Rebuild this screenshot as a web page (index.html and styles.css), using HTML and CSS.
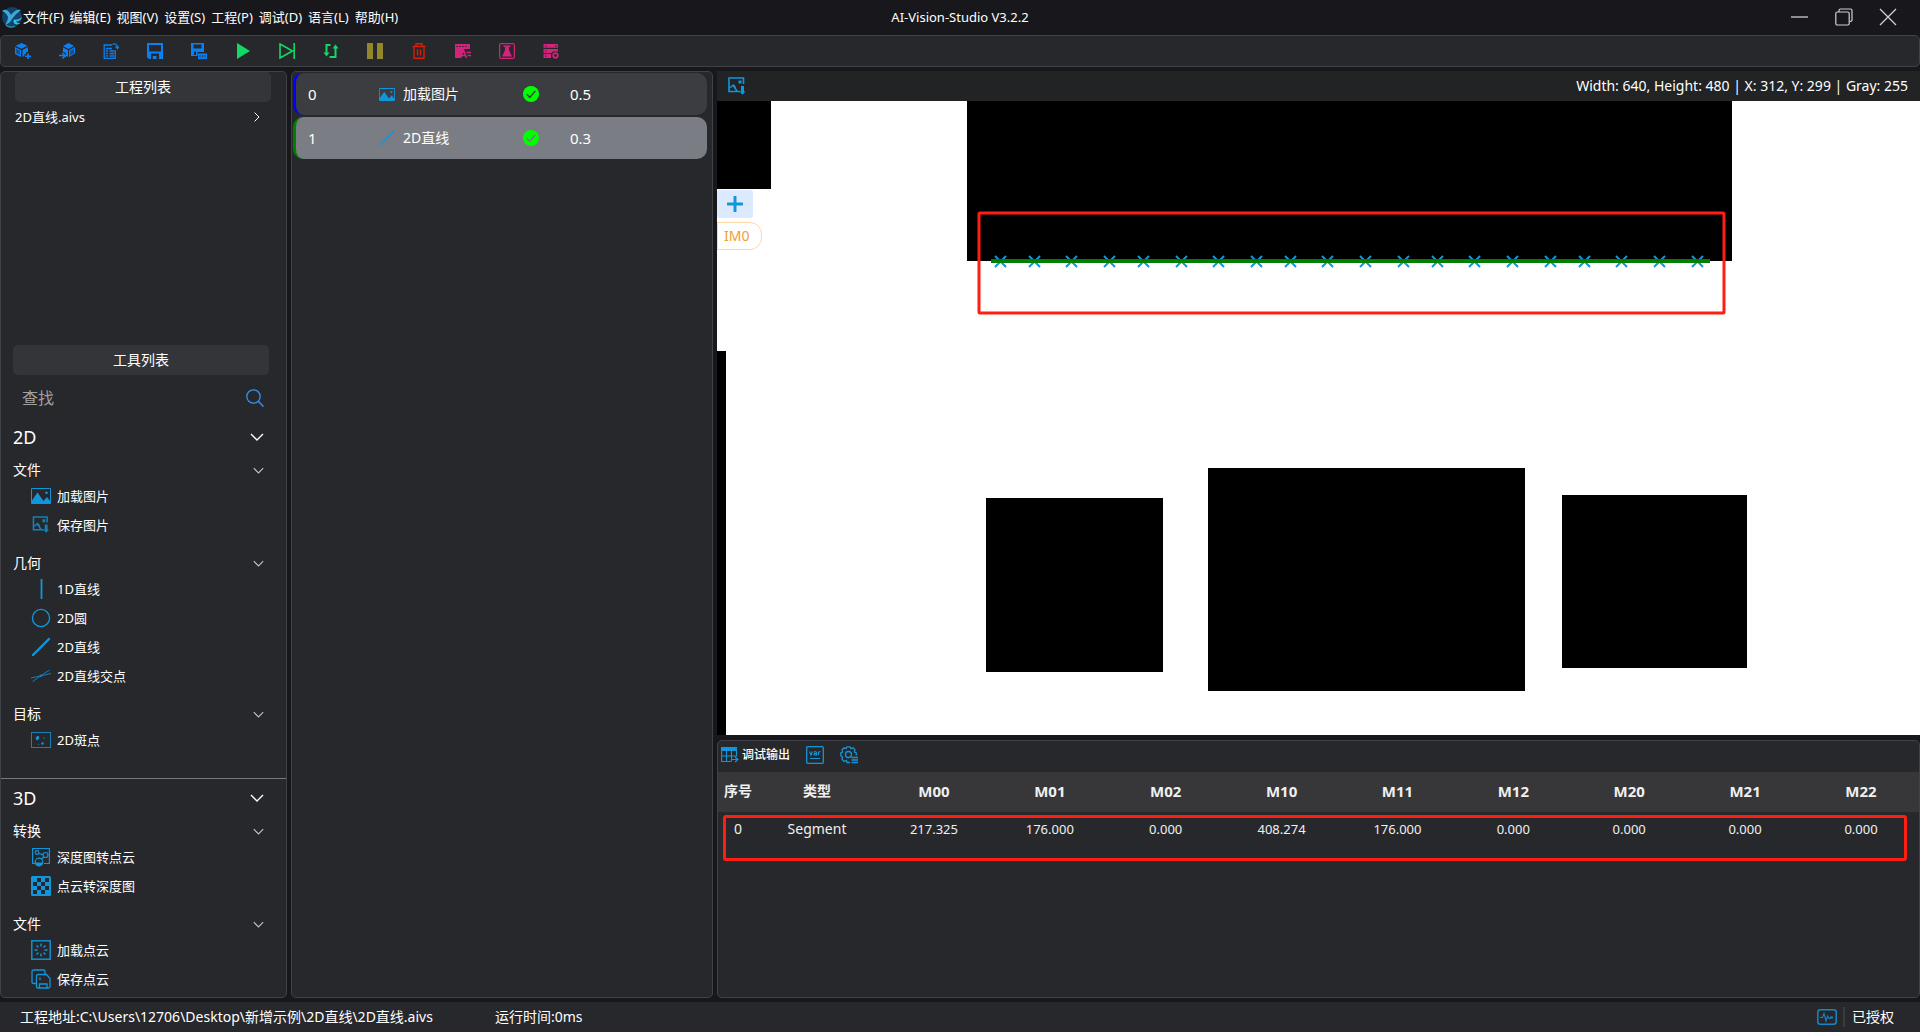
FILE: index.html
```html
<!DOCTYPE html>
<html lang="zh-CN">
<head>
<meta charset="utf-8">
<title>AI-Vision-Studio V3.2.2</title>
<link rel="stylesheet" href="styles.css">
</head>
<body>
<svg class="sprite" aria-hidden="true">
  <symbol id="chev-down" viewBox="0 0 14 8"><path d="M1 1l6 6 6-6" fill="none" stroke="currentColor" stroke-width="1.4"/></symbol>
  <symbol id="picture" viewBox="0 0 20 16"><path d="M1 0h18a1 1 0 0 1 1 1v14a1 1 0 0 1-1 1H1a1 1 0 0 1-1-1V1a1 1 0 0 1 1-1zm0 1v11.500L6.500 4.500 12.500 13l3.500-4 3 4V1zm14.500 2.500a1.300 1.300 0 1 1 0 2.600 1.300 1.300 0 0 1 0-2.600z" fill="currentColor" fill-rule="evenodd"/></symbol>
  <symbol id="save-picture" viewBox="0 0 18 18"><path d="M15.500 7V1H1v13.500h11" fill="none" stroke="currentColor" stroke-width="1.600"/><path d="M1.500 11l4-3 2 2.500M5.500 9l3.500 5" fill="none" stroke="currentColor" stroke-width="1.500"/><path d="M10.500 3.500h3V6.500h-3zM13 9h3v5.500h1.500l-3 3.300-3-3.300H13z" fill="currentColor"/></symbol>
  <symbol id="slash" viewBox="0 0 20 20"><path d="M2 18L18 2" stroke="currentColor" stroke-width="2.400" stroke-linecap="round"/></symbol>
  <symbol id="done" viewBox="0 0 16 16"><circle cx="8" cy="8" r="8" fill="#00ff00"/><path d="M3.800 8.300l3 3 5.500-6.300" fill="none" stroke="currentColor" stroke-width="1.500"/></symbol>
</svg>

<header class="titlebar">
  <nav class="menu">
    <svg class="logo" viewBox="0 0 22 22"><circle cx="11" cy="11" r="10" fill="#15406b"/><path d="M1 5c4-3 7 0 9 4 3-4 6-6 10-5-3 2-6 5-9 9-1 3-4 5-7 6 2-3 3-6 3-8C5.500 7 3 6 1 5z" fill="#3aaad9"/><path d="M13 13.500c3 .5 6-.5 8-2.500-1 3-3 4-6 4.500 1 1.500 3 2 4.500 1.500C16 20 11 18 13 13.500z" fill="#2cc3df"/><path d="M5 19c2 2 6 3 9 1" stroke="#2a8cb8" stroke-width="1.500" fill="none"/></svg>
    <button>文件(F)</button><button>编辑(E)</button><button>视图(V)</button><button>设置(S)</button><button>工程(P)</button><button>调试(D)</button><button>语言(L)</button><button>帮助(H)</button>
  </nav>
  <h1 class="app-title">AI-Vision-Studio V3.2.2</h1>
  <div class="window-controls">
    <button aria-label="最小化"><svg viewBox="0 0 18 18"><path d="M0 9h17" stroke="currentColor" stroke-width="1.300"/></svg></button>
    <button aria-label="还原"><svg viewBox="0 0 18 18"><g fill="none" stroke="currentColor" stroke-width="1.200"><rect x="0.800" y="4" width="13.400" height="13" rx="1.500"/><path d="M4 4V2.500Q4 1 5.500 1H15.500Q17 1 17 2.500V12Q17 13.500 14.500 13.500"/></g></svg></button>
    <button aria-label="关闭"><svg viewBox="0 0 18 18"><path d="M1 1l16 16M17 1L1 17" stroke="currentColor" stroke-width="1.300"/></svg></button>
  </div>
</header>

<div class="toolbar" role="toolbar">
  <button class="c-blue" aria-label="新建工程"><svg viewBox="0 0 16 16"><path d="M6.500 0l6 2.800-6 3-6-3zM0 4l6 3v7L0 11zM13 4v5h-2v2H9.500v1.500L7.500 14V7z" fill="currentColor"/><path d="M1 5.700l4 2V12l-4-2z" fill="#17508c"/><path d="M13 10.500V16M10.200 13.200H16" stroke="currentColor" stroke-width="1.600"/></svg></button>
  <button class="c-blue" aria-label="打开工程"><svg viewBox="0 0 16 16"><path d="M9.500 0L15 3 9.500 6 4 3zM9 7v7l-2-1v-3L4 9V4.500zM10 7l6-3v6.500L10 14z" fill="currentColor"/><path d="M11 7.700l4-2v4.500l-4 2.300z" fill="#17508c"/><path d="M0 12.500h5M3.500 10l3 2.700-3 2.700" fill="none" stroke="currentColor" stroke-width="1.600"/></svg></button>
  <button class="c-blue" aria-label="另存工程"><svg viewBox="0 0 16 16"><g fill="none" stroke="currentColor"><path d="M9 2H1.200v13.300h11V7" stroke-width="1.300"/><path d="M3 5.500h6M3 8h2M6.500 8h4.500M3 10.500h2M6.500 10.500h4.500M3 13h2M6.500 13h4.500" stroke-width="1.300"/><path d="M9.500 1.500c3-1.500 5 0 5 3.500M12.500 3.500l2 2 1.500-2" stroke-width="1.200"/></g></svg></button>
  <button class="c-blue" aria-label="保存"><svg viewBox="0 0 16 16"><path d="M0 0h16v16H2l-2-2zM2 2v6.500h12V2zM4 10.500V16h1.800v-3h3.700v3H12v-5.500z" fill="currentColor" fill-rule="evenodd"/></svg></button>
  <button class="c-blue" aria-label="保存全部"><svg viewBox="0 0 16 16"><path d="M0 0h13v9H6.500v4H0zM2.500 1.500v4h8v-4zM3 8.500V12h2V8.500z" fill="currentColor" fill-rule="evenodd"/><path d="M7 10.500h9V16H7z" fill="currentColor"/><path d="M9 12v2.500M11.500 12v2.500M14 12v2.500" stroke="#27282c" stroke-width=".8"/></svg></button>
  <button class="c-green" aria-label="运行"><svg viewBox="0 0 16 16"><path d="M2 0l13 8L2 16z" fill="currentColor"/></svg></button>
  <button class="c-green" aria-label="单步"><svg viewBox="0 0 16 16"><path d="M1 1l12.500 7L1 15zM15.200 0v16" fill="none" stroke="currentColor" stroke-width="1.600"/></svg></button>
  <button class="c-green" aria-label="循环运行"><svg viewBox="0 0 16 16"><path d="M7.500 2H3.500V11M6.500 14h6V5" fill="none" stroke="currentColor" stroke-width="2"/><path d="M0.500 9.500h6l-3 4zM9.500 5.500h6l-3-4z" fill="currentColor"/></svg></button>
  <button class="c-olive" aria-label="暂停"><svg viewBox="0 0 16 16"><path d="M0 0h6v16H0zM10 0h6v16h-6z" fill="currentColor"/></svg></button>
  <button class="c-red" aria-label="删除"><svg viewBox="0 0 16 16"><path d="M1.500 3.500h13M3 4v11.300h10V4M5 3V.8h6V3M6.500 6.500v6M9.500 6.500v6" fill="none" stroke="currentColor" stroke-width="1.400"/></svg></button>
  <button class="c-pink" aria-label="变量"><svg viewBox="0 0 16 16"><path d="M0 1h15v5H9.500L6 11v4H0z" fill="currentColor"/><path d="M1 3.500h11" stroke="#27282c" stroke-width=".8" stroke-dasharray="2 1"/><path d="M5.500 15L8.500 7l3 8M6.500 12.500h4M11.500 9.500H16M12.500 12.500H16" fill="none" stroke="currentColor" stroke-width="1.500"/></svg></button>
  <button class="c-pink" aria-label="实验"><svg viewBox="0 0 16 16"><rect x=".6" y=".6" width="14.800" height="14.800" rx="1.500" fill="none" stroke="currentColor" stroke-width="1.200"/><path d="M4.500 2.500h7V4H10v3l3 6.500H3L6 7V4H4.500z" fill="currentColor"/></svg></button>
  <button class="c-pink" aria-label="设备设置"><svg viewBox="0 0 16 16"><path d="M.5 1H15v3.800H.5zM.5 6H15v2.500H10L8.500 10H.5zM.5 11H8v4H.5z" fill="currentColor"/><path d="M2 3h1.500M2 8h1.500M2 13h1.500M12 3h2" stroke="#27282c"/><circle cx="12.500" cy="12.500" r="2.300" fill="none" stroke="currentColor" stroke-width="1.700"/></svg></button>
</div>

<main class="workspace">
  <aside class="panel sidebar">
    <section class="projects">
      <h2 class="pill">工程列表</h2>
      <button class="project">2D直线.aivs<svg viewBox="0 0 6 10"><path d="M.6 .6L5 5 .6 9.400" fill="none" stroke="currentColor" stroke-width="1"/></svg></button>
    </section>
    <section class="tools">
      <h2 class="pill">工具列表</h2>
      <div class="search">
        <input type="text" placeholder="查找" aria-label="查找">
        <svg viewBox="0 0 18 18"><circle cx="7.500" cy="7.500" r="6.700" fill="none" stroke="currentColor" stroke-width="1.300"/><path d="M12.300 12.300l5.200 5.200" stroke="currentColor" stroke-width="1.500"/></svg>
      </div>
      <div class="group">
        <button class="group-title">2D<svg><use href="#chev-down"/></svg></button>
        <div class="category">
          <button class="category-title">文件<svg><use href="#chev-down"/></svg></button>
          <button class="tool"><svg class="flat"><use href="#picture"/></svg>加载图片</button>
          <button class="tool"><svg class="dim small"><use href="#save-picture"/></svg>保存图片</button>
        </div>
        <div class="category">
          <button class="category-title">几何<svg><use href="#chev-down"/></svg></button>
          <button class="tool"><svg viewBox="0 0 20 20"><path d="M10.500 0v20" stroke="currentColor" stroke-width="1.800"/></svg>1D直线</button>
          <button class="tool"><svg viewBox="0 0 20 20"><circle cx="10" cy="10" r="8.600" fill="none" stroke="currentColor" stroke-width="1.300"/></svg>2D圆</button>
          <button class="tool"><svg><use href="#slash"/></svg>2D直线</button>
          <button class="tool"><svg class="dim" viewBox="0 0 20 20"><path d="M0 12L20 7.500M1.500 15.500L18.500 4" stroke="currentColor" stroke-width="1"/><circle cx="10" cy="9.800" r="1.300" fill="currentColor"/></svg>2D直线交点</button>
        </div>
        <div class="category">
          <button class="category-title">目标<svg><use href="#chev-down"/></svg></button>
          <button class="tool"><svg class="dim" viewBox="0 0 20 20"><rect x=".5" y="2.500" width="19" height="15" fill="none" stroke="currentColor"/><ellipse cx="6.500" cy="8" rx="1.500" ry="2.300" transform="rotate(25 6.500 8)" fill="#1296db"/><circle cx="11.500" cy="13.500" r="1.200" fill="#1296db"/><circle cx="13" cy="8" r=".8" fill="currentColor"/><circle cx="7.500" cy="14.500" r=".6" fill="currentColor"/></svg>2D斑点</button>
        </div>
      </div>
      <div class="group">
        <button class="group-title">3D<svg><use href="#chev-down"/></svg></button>
        <div class="category">
          <button class="category-title">转换<svg><use href="#chev-down"/></svg></button>
          <button class="tool"><svg viewBox="0 0 20 20"><g fill="none" stroke="currentColor" stroke-width="1.200"><path d="M5 16.500H1.600V1.500h16.800v15H13"/><circle cx="6" cy="5.500" r="1.800"/><circle cx="14.500" cy="8" r="2.500"/><path d="M7.500 6.500l4.500 1.200M12.800 10l-2.500 2.500"/><circle cx="8" cy="15" r="3.800"/></g><path d="M4.200 15.500h7.600a3.800 3.800 0 0 1-7.600 0z" fill="currentColor"/></svg>深度图转点云</button>
          <button class="tool"><svg viewBox="0 0 20 20"><rect width="20" height="20" rx="1.500" fill="currentColor"/><path d="M6 2h4v4H6zM14 2h4v4h-4zM2 6h4v4H2zM10 6h4v4h-4zM6 10h4v4H6zM14 10h4v4h-4zM2 14h4v4H2zM10 14h4v4h-4z" fill="#27282c"/></svg>点云转深度图</button>
        </div>
        <div class="category">
          <button class="category-title">文件<svg><use href="#chev-down"/></svg></button>
          <button class="tool"><svg viewBox="0 0 20 20"><rect x=".8" y=".8" width="18.400" height="18.400" fill="none" stroke="currentColor" stroke-width="1.400"/><path d="M10 3.500v3M10 13.500v3M3.500 10h3M13.500 10h3M5.500 5.500l2 2M12.500 12.500l2 2M14.500 5.500l-2 2M7.500 12.500l-2 2" stroke="currentColor" stroke-width="1.400"/></svg>加载点云</button>
          <button class="tool"><svg viewBox="0 0 20 20"><g fill="none" stroke="currentColor" stroke-width="1.300"><path d="M5 14.500H2.500Q1 14.500 1 13V2.500Q1 1 2.500 1h10Q14 1 14 2.500V5"/><path d="M5.500 7Q5.500 5.500 7 5.500h8.500l3.500 4v8q0 1.500-1.500 1.500H7q-1.500 0-1.500-1.500zM8.500 19v-4h7.500v4M9 8.500v2.500"/></g></svg>保存点云</button>
        </div>
      </div>
    </section>
  </aside>

  <section class="panel flow">
    <div class="step step-blue"><span>0</span><span class="step-name"><svg class="flat"><use href="#picture"/></svg>加载图片</span><svg class="check"><use href="#done"/></svg><span>0.5</span></div>
    <div class="step step-green selected"><span>1</span><span class="step-name"><svg><use href="#slash"/></svg>2D直线</span><svg class="check"><use href="#done"/></svg><span>0.3</span></div>
  </section>

  <div class="right">
    <section class="viewer">
      <div class="viewer-bar">
        <button aria-label="保存图片"><svg><use href="#save-picture"/></svg></button>
        <span>Width: 640, Height: 480 | X: 312, Y: 299 | Gray: 255</span>
      </div>
      <div class="canvas">
        <svg class="scene" viewBox="0 0 1203 634" preserveAspectRatio="xMinYMin slice">
          <rect width="54" height="88"/><rect x="250" width="765" height="160"/><rect y="250" width="9" height="384"/>
          <rect x="269" y="397" width="177" height="174"/><rect x="491" y="367" width="317" height="223"/><rect x="845" y="394" width="185" height="173"/>
          <path class="points" transform="translate(-1 0)" d="M279 155l11 11m0-11l-11 11M313 155l11 11m0-11l-11 11M350 155l11 11m0-11l-11 11M388 155l11 11m0-11l-11 11M422 155l11 11m0-11l-11 11M460 155l11 11m0-11l-11 11M497 155l11 11m0-11l-11 11M535 155l11 11m0-11l-11 11M569 155l11 11m0-11l-11 11M606 155l11 11m0-11l-11 11M644 155l11 11m0-11l-11 11M682 155l11 11m0-11l-11 11M716 155l11 11m0-11l-11 11M753 155l11 11m0-11l-11 11M791 155l11 11m0-11l-11 11M829 155l11 11m0-11l-11 11M863 155l11 11m0-11l-11 11M900 155l11 11m0-11l-11 11M938 155l11 11m0-11l-11 11M976 155l11 11m0-11l-11 11"/>
          <path class="segment" d="M274 160h719"/>
          <rect class="mark" x="262" y="112" width="745" height="100" rx="1"/>
        </svg>
        <div class="overlay">
          <button class="add" aria-label="添加"><svg viewBox="0 0 16 16"><path d="M8 1v14M1 8h14" stroke="currentColor" stroke-width="3" stroke-linecap="round"/></svg></button>
          <button class="image-tag">IM0</button>
        </div>
      </div>
    </section>

    <section class="panel output">
      <div class="output-bar">
        <button class="active"><svg viewBox="0 0 18 18"><path d="M0 1h16v4H0z" fill="currentColor"/><path d="M.6 5v10.500H10M5.500 5v10.500M10.500 5v10.500M.6 10H15.500V5M11 13.500h5.500M14 11l3 2.500-3 2.500" fill="none" stroke="currentColor" stroke-width="1.100"/></svg>调试输出</button>
        <button aria-label="变量"><svg viewBox="0 0 18 18"><rect x=".7" y=".7" width="16.600" height="16.600" rx="1" fill="none" stroke="currentColor" stroke-width="1.300"/><path d="M3.500 5.500L5 9l1.500-3.500M8 6.300c1-1 2.500-.8 2.500.5V9H9C7.500 9 7.500 7.500 9 7.500h1.500M12.500 9V5.500M12.500 7q.5-1.500 2-1.500M4 12.500h10" fill="none" stroke="currentColor" stroke-width="1.100"/></svg></button>
        <button aria-label="输出设置"><svg viewBox="0 0 18 18"><g fill="none" stroke="currentColor" stroke-width="1.300"><path d="M10 16.500H7L6.300 14.500 4 15.500 2 13.200 2.700 11.200 .8 10V7L2.700 6 2 4l2-2.200L6 2.700 7 .8h3l1 1.900 2.200-.9L15 4l-.7 2L16.300 7v2.500"/><circle cx="8.500" cy="8.500" r="3"/><path d="M11.500 11.500H18M11.500 14H18M11.500 16.500H18"/></g></svg></button>
      </div>
      <div class="table-wrap">
        <table>
          <thead><tr><th class="col-no">序号</th><th class="col-type">类型</th><th>M00</th><th>M01</th><th>M02</th><th>M10</th><th>M11</th><th>M12</th><th>M20</th><th>M21</th><th>M22</th></tr></thead>
          <tbody><tr><td class="lead">0</td><td class="lead">Segment</td><td>217.325</td><td>176.000</td><td>0.000</td><td>408.274</td><td>176.000</td><td>0.000</td><td>0.000</td><td>0.000</td><td>0.000</td></tr></tbody>
        </table>
        <div class="row-mark"></div>
      </div>
    </section>
  </div>
</main>

<footer class="status">
  <span class="path">工程地址:C:\Users\12706\Desktop\新增示例\2D直线\2D直线.aivs</span>
  <span class="runtime">运行时间:0ms</span>
  <svg viewBox="0 0 20 16"><rect x=".8" y=".8" width="18.400" height="14.400" rx="2.500" fill="none" stroke="currentColor" stroke-width="1.500"/><path d="M3 8.500h2.500l1.500-4 2 7.500 1.500-5L12 9.500h1.500" fill="none" stroke="currentColor" stroke-width="1.100"/><path d="M13 8.500h3" stroke="currentColor" stroke-width="2"/></svg>
  <span class="license">已授权</span>
</footer>
</body>
</html>
```

FILE: styles.css
```css
:root {
  --bg: #18181c;
  --panel: #27282c;
  --line: #414247;
  --accent: #1296db;
}
* { box-sizing: border-box; }
body {
  margin: 0;
  min-height: 100vh;
  display: grid;
  grid-template-rows: 35px 32px 1fr 30px;
  background: var(--bg);
  color: #fff;
  font: 14px/20px "Noto Sans", "Noto Sans CJK SC", sans-serif;
}
button {
  padding: 0;
  border: 0;
  background: none;
  color: inherit;
  font: inherit;
  display: flex;
  align-items: center;
}
h1, h2 { margin: 0; font-size: inherit; font-weight: 400; }
svg { flex: none; display: block; }
.sprite { position: absolute; width: 0; height: 0; }

.titlebar {
  display: grid;
  grid-template-columns: 1fr auto 1fr;
  align-items: center;
  padding-bottom: 1px;
  font-size: 13px;
}
.menu { display: flex; gap: 6px; padding-left: 1px; white-space: nowrap; }
.logo { width: 22px; height: 22px; margin-right: -6px; }
.window-controls { display: flex; justify-content: flex-end; padding-right: 10px; color: #d0d0d2; }
.window-controls button { width: 44px; height: 34px; justify-content: center; }
.window-controls svg { width: 18px; height: 18px; }

.toolbar {
  display: flex;
  background: var(--panel);
  border: 1px solid var(--line);
  border-radius: 5px;
}
.toolbar button { width: 44px; justify-content: center; }
.toolbar svg { width: 16px; height: 16px; }
.c-blue { color: #0a80f5; }
.c-green { color: #13d866; }
.c-olive { color: #93872b; }
.c-red { color: #d81e06; }
.c-pink { color: #d4237a; }

.workspace {
  display: grid;
  grid-template-columns: 287px 422px 1fr;
  column-gap: 4px;
  padding: 4px 0;
}
.panel { background: var(--panel); border: 1px solid var(--line); border-radius: 5px; }

.sidebar { display: flex; flex-direction: column; }
.projects { height: 273px; padding: 0 14px; }
.pill {
  width: 256px;
  height: 30px;
  line-height: 30px;
  text-align: center;
  background: #343539;
  border-radius: 5px;
}
.project { width: 245px; height: 30px; justify-content: space-between; font-size: 13px; }
.project svg { width: 6px; height: 10px; }
.tools > .pill { margin-left: 12px; }
.search { display: flex; align-items: center; height: 45px; padding: 0 22px 0 21px; color: #3a8ff0; }
.search input {
  flex: 1;
  min-width: 0;
  padding: 0;
  border: 0;
  outline: 0;
  background: none;
  color: #fff;
  font: inherit;
  font-size: 16px;
}
.search input::placeholder { color: #a0a0a2; }
.search svg { width: 18px; height: 18px; }
.group + .group { margin-top: 24px; padding-top: 2px; border-top: 1px solid #77777a; }
.group-title { width: 100%; height: 34px; padding: 0 22px 0 12px; margin-bottom: 5px; justify-content: space-between; font-size: 18px; }
.group-title svg { width: 14px; height: 8px; }
.category + .category { margin-top: 13px; }
.category-title { width: 100%; height: 22px; padding: 0 22px 0 12px; justify-content: space-between; }
.category-title svg { width: 11px; height: 7px; color: #c4c4c6; }
.tool { width: 100%; height: 29px; padding-left: 30px; gap: 6px; font-size: 13px; }
.tool svg { width: 20px; height: 20px; color: var(--accent); }
.tool .flat { height: 16px; }
.tool .small { height: 17px; }
.tool .dim { color: #1580b9; }

.flow { padding: 1px 5px 0 1px; display: flex; flex-direction: column; gap: 2px; }
.step {
  display: grid;
  grid-template-columns: 71px 144px 47px 1fr;
  align-items: center;
  height: 42px;
  padding-left: 12px;
  border-left: 3px solid;
  border-radius: 10px;
  background: #3c3d40;
  font-size: 15px;
}
.step-blue { border-left-color: #0000ff; }
.step-green { border-left-color: #008000; }
.selected { background: #7a7d84; }
.step-name { display: flex; align-items: center; gap: 8px; font-size: 14px; }
.step-name svg { width: 16px; height: 16px; color: var(--accent); }
.step-name .flat { height: 13px; }
.check { width: 16px; height: 16px; color: #3c3d40; }
.selected .check { color: #7a7d84; }

.right { display: grid; grid-template-rows: 1fr 258px; row-gap: 5px; min-width: 0; }
.viewer { display: flex; flex-direction: column; }
.viewer-bar {
  display: flex;
  align-items: center;
  justify-content: space-between;
  height: 30px;
  padding: 0 12px 0 11px;
  background: #212325;
}
.viewer-bar svg { width: 18px; height: 18px; color: var(--accent); }
.canvas { position: relative; flex: 1; background: #fff; }
.scene { position: absolute; inset: 0; width: 100%; height: 100%; }
.points { fill: none; stroke: var(--accent); stroke-width: 2; }
.segment { stroke: #008000; stroke-width: 4; }
.mark { fill: none; stroke: #ff1e12; stroke-width: 3; }
.overlay { position: absolute; left: 0; top: 89px; display: flex; flex-direction: column; gap: 4px; }
.add { width: 36px; height: 28px; justify-content: center; border-radius: 3px; background: #dbeafe; color: var(--accent); }
.add svg { width: 16px; height: 16px; }
.image-tag {
  width: 45px;
  height: 28px;
  padding-left: 6px;
  border: 1px solid #fcd9a4;
  border-radius: 0 12px 12px 0;
  background: #fff;
  color: #f0a030;
}

.output { overflow: hidden; }
.output-bar { display: flex; align-items: center; gap: 16px; height: 31px; padding: 0 0 3px 3px; }
.output-bar button { gap: 3px; font-size: 12px; color: var(--accent); }
.output-bar .active { color: #fff; font-weight: 500; }
.output-bar svg { width: 18px; height: 18px; color: var(--accent); }
.table-wrap { position: relative; }
table { width: 100%; table-layout: fixed; border-collapse: collapse; color: #f0f0f0; }
.col-no { width: 40px; }
.col-type { width: 118px; }
th { height: 40px; padding: 0 0 2px; background: #373739; font-size: 15px; font-weight: 700; white-space: nowrap; }
td { height: 34px; padding: 0; text-align: center; font-size: 13px; }
td.lead { font-size: 14px; }
th.col-no, th.col-type { font-size: 14px; }
.row-mark {
  position: absolute;
  left: 5px;
  right: 12px;
  top: 43px;
  height: 46px;
  border: 3px solid #ff1e12;
  border-radius: 3px;
}

.status { display: flex; align-items: center; padding-left: 20px; background: var(--panel); }
.runtime { margin-left: 62px; }
.status svg { width: 20px; height: 16px; margin-left: auto; color: #1787c3; }
.license { margin-left: 6px; padding: 0 26px 0 7px; border-left: 2px solid #3a3b3f; }
```
